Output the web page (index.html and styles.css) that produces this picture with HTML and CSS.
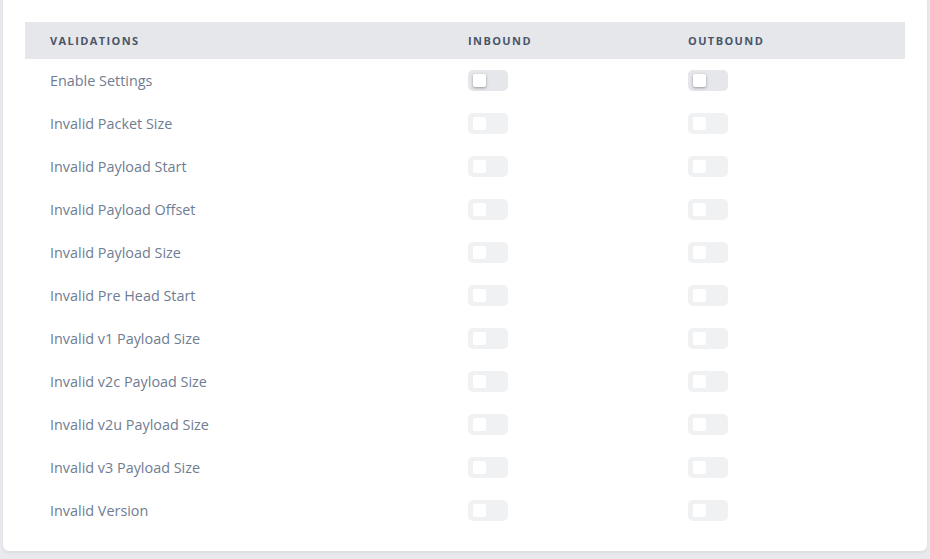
FILE: index.html
```html
<!DOCTYPE html>
<html>
<head>
<meta charset="utf-8">
<link rel="stylesheet" href="styles.css">
</head>
<body>
<div class="card">
  <table class="vtable">
    <colgroup><col class="c1"><col class="c2"><col class="c3"></colgroup>
    <thead>
      <tr><th>Validations</th><th>Inbound</th><th>Outbound</th></tr>
    </thead>
    <tbody>
      <tr><td>Enable Settings</td><td><span class="tg"><span class="kn"></span></span></td><td><span class="tg"><span class="kn"></span></span></td></tr>
      <tr><td>Invalid Packet Size</td><td><span class="tg off"><span class="kn"></span></span></td><td><span class="tg off"><span class="kn"></span></span></td></tr>
      <tr><td>Invalid Payload Start</td><td><span class="tg off"><span class="kn"></span></span></td><td><span class="tg off"><span class="kn"></span></span></td></tr>
      <tr><td>Invalid Payload Offset</td><td><span class="tg off"><span class="kn"></span></span></td><td><span class="tg off"><span class="kn"></span></span></td></tr>
      <tr><td>Invalid Payload Size</td><td><span class="tg off"><span class="kn"></span></span></td><td><span class="tg off"><span class="kn"></span></span></td></tr>
      <tr><td>Invalid Pre Head Start</td><td><span class="tg off"><span class="kn"></span></span></td><td><span class="tg off"><span class="kn"></span></span></td></tr>
      <tr><td>Invalid v1 Payload Size</td><td><span class="tg off"><span class="kn"></span></span></td><td><span class="tg off"><span class="kn"></span></span></td></tr>
      <tr><td>Invalid v2c Payload Size</td><td><span class="tg off"><span class="kn"></span></span></td><td><span class="tg off"><span class="kn"></span></span></td></tr>
      <tr><td>Invalid v2u Payload Size</td><td><span class="tg off"><span class="kn"></span></span></td><td><span class="tg off"><span class="kn"></span></span></td></tr>
      <tr><td>Invalid v3 Payload Size</td><td><span class="tg off"><span class="kn"></span></span></td><td><span class="tg off"><span class="kn"></span></span></td></tr>
      <tr><td>Invalid Version</td><td><span class="tg off"><span class="kn"></span></span></td><td><span class="tg off"><span class="kn"></span></span></td></tr>
    </tbody>
  </table>
</div>
</body>
</html>
```

FILE: styles.css
```css
html, body { margin: 0; padding: 0; }
body {
  background: #e8eaed;
  font-family: "Open Sans", "Noto Sans", sans-serif;
  width: 930px;
  height: 559px;
  overflow: hidden;
}
.card {
  background: #fff;
  margin: 0 3px;
  margin-top: -4px;
  padding: 26px 22px 19px 22px;
  border-radius: 6px;
  box-shadow: 0 2px 3px rgba(0,0,0,0.06);
}
.vtable {
  width: 880px;
  border-collapse: collapse;
  table-layout: fixed;
}
.c1 { width: 418px; }
.c2 { width: 220px; }
.c3 { width: 242px; }
.vtable th {
  background: #e5e7eb;
  height: 37px;
  padding: 0 0 0 25px;
  text-align: left;
  font-size: 11px;
  font-weight: 700;
  letter-spacing: 1.4px;
  text-transform: uppercase;
  color: #4a5568;
}
.vtable td {
  height: 43px;
  padding: 0 0 0 25px;
  font-size: 14.4px;
  color: #6f7d92;
  vertical-align: middle;
}
.tg {
  display: flex;
  align-items: center;
  width: 40px;
  height: 21px;
  border-radius: 5px;
  background: #e5e7eb;
  box-sizing: border-box;
  padding-left: 5px;
}
.kn {
  width: 13px;
  height: 13px;
  background: #fff;
  border-radius: 2px;
  box-shadow: 0 1px 3px rgba(0,0,0,0.35);
}
.tg.off { background: #f0f1f3; }
.tg.off .kn { box-shadow: none; }
```
